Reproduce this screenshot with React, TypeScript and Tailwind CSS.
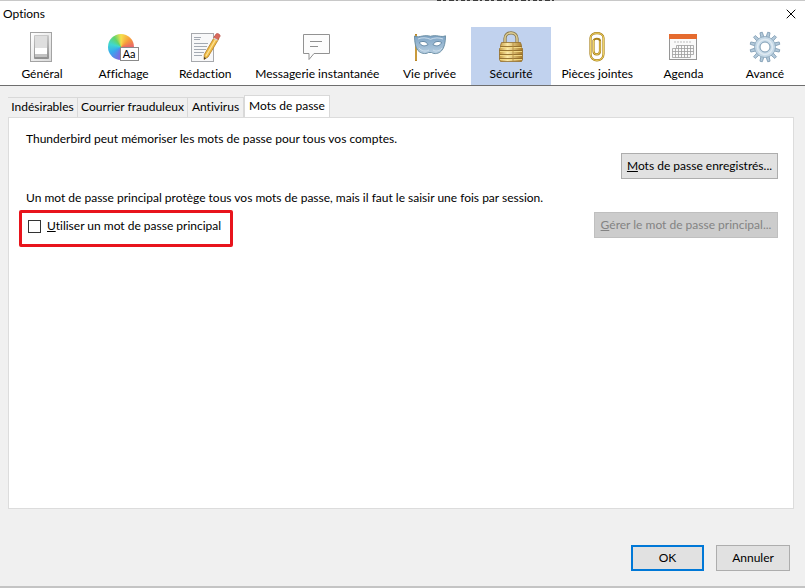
import React from "react";
import { X } from "lucide-react";

function SwitchIcon() {
  return (
    <svg width="32" height="32" viewBox="0 0 32 32" aria-hidden="true">
      <defs>
        <linearGradient id="plate" x1="0" y1="0" x2="1" y2="1">
          <stop offset="0" stopColor="#ffffff" />
          <stop offset="1" stopColor="#dadada" />
        </linearGradient>
        <linearGradient id="well" x1="0" y1="0" x2="0" y2="1">
          <stop offset="0" stopColor="#c9c9c9" />
          <stop offset="1" stopColor="#8f8f8f" />
        </linearGradient>
      </defs>
      <rect x="4.500" y="1.500" width="21" height="29" fill="url(#plate)" stroke="#a3a3a3" />
      <rect x="8" y="4" width="15" height="24" rx="1" fill="url(#well)" />
      <rect x="9" y="5" width="12" height="13" fill="#dedede" />
      <rect x="9" y="17" width="12" height="6" fill="#ffffff" />
      <rect x="9" y="23" width="12" height="3" fill="#c2c2c2" />
    </svg>
  );
}

function DisplayIcon() {
  return (
    <div className="relative size-8">
      <div className="absolute top-[3px] left-0 size-[26px] rounded-full bg-[conic-gradient(#f6e04c,#f79a3c_50deg,#e8646c_90deg,#b660c0_150deg,#7b6be0_190deg,#38a8ee_240deg,#3fd8d0_285deg,#63d46a_325deg,#f6e04c)]" />
      <div className="absolute top-4 left-3 flex h-[14px] w-[19px] items-center justify-center border border-[#8a8a8a] bg-white text-[11px] leading-3 text-black">
        Aa
      </div>
    </div>
  );
}

function ComposeIcon() {
  return (
    <svg width="32" height="32" viewBox="0 0 32 32" aria-hidden="true">
      <rect x="2.500" y="2.500" width="22" height="28" fill="#f8f8f9" stroke="#a7a9ad" />
      <path d="M5 6.500h7M5 8.500h6M5 12.500h14M5 15.500h13M5 18.500h12M5 21.500h10M5 24.500h8" stroke="#a3a9b2" />
      <path d="M26 5l4 2.500L19 26l-4 2.500.300-5z" fill="#f0bd45" stroke="#b27b24" strokeWidth=".8" />
      <path d="M27.500 7L17 25" stroke="#fbe19a" strokeWidth="1.200" />
      <path d="M24.500 7l2.500-4c1-1.500 5 .5 4 2.500L28.500 9z" fill="#d9695c" stroke="#b44e45" strokeWidth=".6" />
      <path d="M24.500 7l4 2.300" stroke="#d8d8d8" strokeWidth="1.300" />
      <path d="M15 28.500l.3-2.500 1.700 1.200z" fill="#333" />
    </svg>
  );
}

function ChatIcon() {
  return (
    <svg width="32" height="32" viewBox="0 0 32 32" aria-hidden="true">
      <path d="M2.500 3.500h26v19H13l-5 6v-6H2.500z" fill="#fcfcfc" stroke="#929292" />
      <path d="M9 10.500h12M9 15.500h8" stroke="#8f8f8f" />
    </svg>
  );
}

function MaskIcon() {
  return (
    <svg width="34" height="32" viewBox="0 0 34 32" aria-hidden="true">
      <defs>
        <linearGradient id="mask" x1="0" y1="0" x2="0" y2="1">
          <stop offset="0" stopColor="#7ea4c5" />
          <stop offset="1" stopColor="#b5cde0" />
        </linearGradient>
      </defs>
      <path d="M3 3v27" stroke="#b98526" strokeWidth="2" />
      <path d="M3 4v25" stroke="#e8c368" strokeWidth=".7" />
      <path
        d="M1.500 5c3 1.500 5 .5 8 0 3-.5 6-.5 8 .3 2-.8 5-.8 8-.3 3 .5 4.500.8 7-.2 0 6-1 12-4 15-2.500 2.800-7 3.700-10 1.700h-3c-3 2-8 1-10.500-2C2.500 16.500 1.500 11 1.500 5z"
        fill="url(#mask)"
        stroke="#64899f"
        strokeWidth=".9"
      />
      <path d="M5 8c4-1.800 8-1.500 12.500.3C22 6.500 26 6.500 30 8M6 17c2 3 7 4 10 2M29 17c-2 3-6 4-9 2" fill="none" stroke="#d3e2ee" strokeWidth=".9" />
      <path d="M6.500 11.500c3-1.800 6.500-1.300 8.500 2-2.500 2-7 2-8.500-2zM28.500 11.500c-3-1.800-6.500-1.300-8.500 2 2.500 2 7 2 8.500-2z" fill="#fff" stroke="#4f7797" strokeWidth=".8" />
    </svg>
  );
}

function LockIcon() {
  return (
    <svg width="32" height="32" viewBox="0 0 32 32" aria-hidden="true">
      <defs>
        <linearGradient id="brass" x1="0" y1="0" x2="1" y2="0">
          <stop offset="0" stopColor="#c49a42" />
          <stop offset=".35" stopColor="#fbe9a6" />
          <stop offset="1" stopColor="#a87a28" />
        </linearGradient>
      </defs>
      <path d="M10 13V7.500c0-7.500 12-7.500 12 0V13" fill="none" stroke="#85764a" strokeWidth="3.200" />
      <path d="M10 13V7.500c0-7.500 12-7.500 12 0V13" fill="none" stroke="#dccb90" strokeWidth="1.600" />
      <path d="M6.500 11.500h19l1 3v2l1 1v11l-1 2h-21l-1-2v-11l1-1v-2z" fill="url(#brass)" stroke="#94702c" strokeWidth=".8" />
      <path d="M5.500 15.500h21M4.500 19.500h23M4.500 23.500h23M4.500 27.500h23" stroke="#8f6b2a" strokeWidth=".9" />
      <path d="M5.500 16.500h21M5 20.500h22M5 24.500h22M5 28.500h22" stroke="#f6dc88" strokeWidth=".9" />
      <path d="M18 12v18" stroke="#b28a3c" strokeWidth=".8" />
    </svg>
  );
}

function ClipIcon() {
  return (
    <svg width="32" height="32" viewBox="0 0 32 32" fill="none" aria-hidden="true">
      <path d="M12.500 9v11c0 4.500 6.500 4.500 6.500 0V10M12.500 9M9.500 23V7c0-6.500 13-6.500 13 0v16c0 8.500-13 8.500-13 0zM12.500 10c0-3 6.500-3 6.500 0" stroke="#a98019" strokeWidth="2.200" />
      <path d="M12.500 9v11c0 4.500 6.500 4.500 6.500 0V10M9.500 23V7c0-6.500 13-6.500 13 0v16c0 8.500-13 8.500-13 0z" stroke="#efd366" strokeWidth="1" />
    </svg>
  );
}

function CalendarIcon() {
  return (
    <svg width="32" height="32" viewBox="0 0 32 32" aria-hidden="true">
      <rect x="2.500" y="3.500" width="27" height="25" fill="#fafafa" stroke="#969696" />
      <rect x="2" y="3" width="28" height="5" fill="#e56b2f" />
      <path d="M7 11h18" stroke="#bdbdbd" strokeDasharray="2 1" />
      <path d="M9.500 14.500h17v9h-3v3h-18v-9h4zM5.500 20.500h21M5.500 23.500h18M9.500 17.500h17M8.500 17.500v9M11.500 14.500v12M14.500 14.500v12M17.500 14.500v12M20.500 14.500v12M23.500 14.500v9" fill="none" stroke="#9d9d9d" strokeWidth=".8" />
    </svg>
  );
}

const TEETH = [0, 30, 60, 90, 120, 150, 180, 210, 240, 270, 300, 330];

function GearIcon() {
  return (
    <svg width="32" height="32" viewBox="0 0 32 32" aria-hidden="true">
      {TEETH.map((angle) => (
        <path
          key={angle}
          d="M14.500 6L14.800 1h2.400L17.500 6z"
          transform={`rotate(${angle + 15} 16 16)`}
          fill="#b4cadb"
          stroke="#7f9cb2"
          strokeWidth=".8"
        />
      ))}
      <circle cx="16" cy="16" r="10.500" fill="#c6d9e7" stroke="#8ba7bb" strokeWidth=".8" />
      <circle cx="16" cy="16" r="7.500" fill="none" stroke="#dfeaf2" strokeWidth="1.500" />
      <circle cx="16" cy="16" r="5" fill="#fff" stroke="#7e9db4" />
    </svg>
  );
}

const categories = [
  { label: "Général", icon: SwitchIcon, width: "w-20" },
  { label: "Affichage", icon: DisplayIcon, width: "w-20" },
  { label: "Rédaction", icon: ComposeIcon, width: "w-20" },
  { label: "Messagerie instantanée", icon: ChatIcon, width: "w-[141px]" },
  { label: "Vie privée", icon: MaskIcon, width: "w-20" },
  { label: "Sécurité", icon: LockIcon, width: "w-20", active: true },
  { label: "Pièces jointes", icon: ClipIcon, width: "w-[89px]" },
  { label: "Agenda", icon: CalendarIcon, width: "w-20" },
  { label: "Avancé", icon: GearIcon, width: "w-20" },
];

const tabs = [
  { label: "Indésirables", width: "w-[70px]" },
  { label: "Courrier frauduleux", width: "w-[110px]" },
  { label: "Antivirus", width: "w-[56px]" },
];

export default function App() {
  return (
    <div className="relative flex min-h-screen flex-col border-b-2 border-[#c4c4c4] bg-[#f0f0f0] font-[Lato,'Open_Sans',sans-serif] text-[12px] leading-4 text-black [font-variant-ligatures:none]">
      {/* edge of the window that lies behind the dialog */}
      <svg className="absolute top-0 left-[437px]" width="117" height="2" aria-hidden="true">
        <path d="M0 .5h117" stroke="#3c3c3c" strokeDasharray="4 2 3 3 5 2 2 3" />
      </svg>
      <header className="border-b border-[#6e6e6e] bg-white">
        <div className="flex h-[27px] items-center justify-between border-t border-[#c8c8c8] pr-[6px] pl-[3px]">
          <h1>Options</h1>
          <button aria-label="Fermer">
            <X size={16} strokeWidth={1.500} />
          </button>
        </div>
        <nav className="flex justify-between pl-[2px]">
          {categories.map(({ label, icon: Icon, width, active }) => (
            <button
              key={label}
              className={`flex h-[58px] flex-col items-center pt-1 whitespace-nowrap ${width} ${active ? "bg-[#c1d2ee]" : ""}`}
            >
              <Icon />
              <span className="mt-[3px]">{label}</span>
            </button>
          ))}
        </nav>
      </header>

      <main className="flex flex-1 flex-col px-2 pt-[9px]">
        <div role="tablist" className="flex items-end pr-[3px]">
          {tabs.map(({ label, width }) => (
            <button
              key={label}
              role="tab"
              aria-selected="false"
              className={`h-5 border-t border-r border-[#d9d9d9] pb-[2px] text-center whitespace-nowrap ${width}`}
            >
              {label}
            </button>
          ))}
          <button
            role="tab"
            aria-selected="true"
            className="h-[22px] w-[86px] border border-b-0 border-[#d9d9d9] bg-white pb-[2px] whitespace-nowrap"
          >
            Mots de passe
          </button>
        </div>

        <section className="mr-[3px] flex-1 border border-[#dcdcdc] bg-white pt-[13px] pr-[15px] pl-[10px]">
          <p className="pl-[7px]">Thunderbird peut mémoriser les mots de passe pour tous vos comptes.</p>
          <div className="mt-[6px] flex justify-end">
            <button className="h-[26px] w-[157px] border border-[#adadad] bg-[#e1e1e1] whitespace-nowrap">
              <u>M</u>ots de passe enregistrés...
            </button>
          </div>
          <p className="mt-[11px] pl-[7px]">
            Un mot de passe principal protège tous vos mots de passe, mais il faut le saisir une fois par session.
          </p>
          <div className="mt-1 flex items-start justify-between">
            <label className="flex h-[37px] w-[214px] items-center gap-[6px] rounded-xs border-3 border-[#e8141c] pb-[5px] pl-[6px] whitespace-nowrap">
              <input type="checkbox" className="size-[13px] shrink-0 appearance-none border border-[#333333] bg-white" />
              <span>
                <u>U</u>tiliser un mot de passe principal
              </span>
            </label>
            <button
              disabled
              className="mt-[2px] h-[26px] w-[184px] border border-[#bfbfbf] bg-[#cccccc] whitespace-nowrap text-[#838383]"
            >
              <u>G</u>érer le mot de passe principal...
            </button>
          </div>
        </section>

        <footer className="flex justify-end gap-3 pt-9 pr-[7px] pb-[15px]">
          <button className="h-[26px] w-[73px] border-2 border-[#0078d7] bg-[#e1e1e1]">OK</button>
          <button className="h-[26px] w-[74px] border border-[#adadad] bg-[#e1e1e1]">Annuler</button>
        </footer>
      </main>
    </div>
  );
}
